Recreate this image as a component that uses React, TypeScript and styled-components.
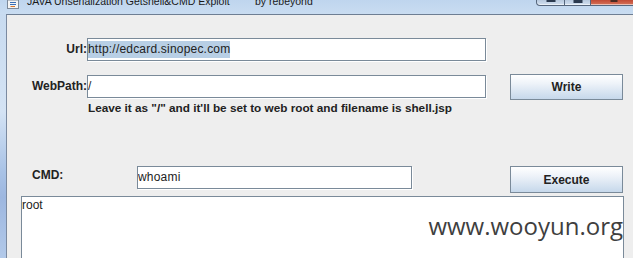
import React from "react";
import styled, { createGlobalStyle } from "styled-components";

const Global = createGlobalStyle`
  html, body {
    margin: 0;
    padding: 0;
    width: 633px;
    height: 258px;
    overflow: hidden;
    background: #eeeeee;
  }
  #root { width: 633px; height: 258px; overflow: hidden; }
`;

const Window = styled.div`
  width: 645px;
  height: 258px;
  display: flex;
  flex-direction: column;
  background: linear-gradient(180deg, #c6daef 0%, #bcd3ec 100%);
`;

const TitleBar = styled.div`
  height: 14px;
  flex-shrink: 0;
  display: flex;
  align-items: flex-start;
  overflow: hidden;
  background: linear-gradient(180deg, #bfd5ee 0%, #c9dcf1 100%);
  font-family: "Liberation Sans", Arial, sans-serif;
  font-size: 10.5px;
  color: #1a1a1a;
`;

const AppIcon = styled.svg`
  margin-left: 7px;
  width: 12px;
  height: 9px;
  flex-shrink: 0;
`;

const TitleText = styled.span<{ $w?: number }>`
  display: block;
  margin-top: -6px;
  line-height: 14px;
  white-space: nowrap;
  ${(p) => (p.$w ? `width: ${p.$w}px;` : "")}
  flex-shrink: 0;
`;

const TitleMain = styled(TitleText)`
  margin-left: 8px;
`;

const Controls = styled.div`
  margin-left: auto;
  margin-right: 7px;
  display: flex;
  flex-shrink: 0;
`;

const CtlButton = styled.div<{ $w: number; $kind: "min" | "max" | "close" }>`
  width: ${(p) => p.$w}px;
  height: 6px;
  box-sizing: border-box;
  border: 1px solid #56667c;
  border-top: none;
  margin-left: -1px;
  position: relative;
  background: ${(p) =>
    p.$kind === "close"
      ? "linear-gradient(180deg, #c24a35 0%, #d5735a 100%)"
      : "linear-gradient(180deg, #b7c8dd 0%, #d3e1f1 100%)"};
  border-radius: ${(p) =>
    p.$kind === "min" ? "0 0 0 4px" : p.$kind === "close" ? "0 0 4px 0" : "0"};
  box-shadow: inset 0 -1px 0 rgba(255, 255, 255, 0.55);
`;

const Glyph = styled.div<{ $c: string; $w: number; $h: number }>`
  position: absolute;
  top: 0;
  left: 50%;
  transform: translateX(-50%);
  width: ${(p) => p.$w}px;
  height: ${(p) => p.$h}px;
  background: ${(p) => p.$c};
`;

const Body = styled.div`
  flex: 1;
  display: flex;
  min-height: 0;
`;

const Frame = styled.div`
  width: 6px;
  flex-shrink: 0;
  background: linear-gradient(
    180deg,
    #c8dbf0 0%,
    #d4e3f4 40%,
    #a8c2e6 65%,
    #9db7e0 75%,
    #b2c9e9 100%
  );
`;

const Content = styled.div`
  flex: 1;
  display: flex;
  flex-direction: column;
  background: #eeeeee;
  border-top: 1px solid #6e7e93;
  border-left: 1px solid #7b8aa0;
  padding-top: 23px;
  font-family: "Liberation Sans", Arial, sans-serif;
  font-size: 12px;
  color: #222;
  overflow: hidden;
`;

const Row = styled.div<{ $mt: number }>`
  display: flex;
  align-items: flex-start;
  margin-top: ${(p) => p.$mt}px;
  flex-shrink: 0;
`;

const Label = styled.div`
  width: 80px;
  text-align: right;
  font-weight: bold;
  line-height: 23px;
  white-space: nowrap;
`;

const CmdLabel = styled.div`
  margin-left: 25px;
  margin-top: 2px;
  width: 105px;
  font-weight: bold;
  line-height: 14px;
`;

const TextField = styled.div<{ $w: number }>`
  width: ${(p) => p.$w}px;
  height: 23px;
  box-sizing: border-box;
  border: 1px solid #7a8a99;
  box-shadow: 1px 1px 0 #ffffff;
  background: #ffffff;
  display: flex;
  align-items: center;
  line-height: 21px;
  white-space: nowrap;
  overflow: hidden;
  letter-spacing: 0.2px;
  color: #222;
`;

const Selected = styled.span`
  background: #b8cfe5;
  line-height: 17px;
  height: 17px;
  display: inline-block;
`;

const Button = styled.div<{ $ml: number; $mt: number; $h: number }>`
  margin-left: ${(p) => p.$ml}px;
  margin-top: ${(p) => p.$mt}px;
  width: 113px;
  height: ${(p) => p.$h}px;
  box-sizing: border-box;
  border: 1px solid #7a8a99;
  background: linear-gradient(180deg, #ffffff 0%, #eef3f9 35%, #c6d8eb 100%);
  display: flex;
  align-items: center;
  justify-content: center;
  font-weight: bold;
  color: #222;
`;

const Help = styled.div`
  margin-left: 81px;
  margin-top: 1px;
  line-height: 14px;
  font-size: 11.75px;
  font-weight: bold;
  white-space: nowrap;
  flex-shrink: 0;
`;

const Output = styled.div`
  position: relative;
  margin-top: 3px;
  margin-left: 14px;
  width: 603px;
  height: 100px;
  flex-shrink: 0;
  box-sizing: border-box;
  border: 1px solid #7a8a99;
  background: #ffffff;
  padding-top: 1px;
  line-height: 14px;
`;

const Watermark = styled.div`
  position: absolute;
  right: 0;
  top: 17px;
  font-family: "Open Sans", "Noto Sans", sans-serif;
  font-size: 24px;
  line-height: 24px;
  color: #3f3f3f;
  white-space: nowrap;
`;

export default function App() {
  return (
    <>
      <Global />
      <Window>
        <TitleBar>
          <AppIcon viewBox="0 0 12 9">
            <rect x="0.5" y="0" width="11" height="8.5" fill="#f4f4f4" stroke="#7d8a9a" />
            <path d="M3 2.5h6M3 4.5h6" stroke="#3b6fb6" strokeWidth="1" />
            <path d="M3.5 6.5h4.5" stroke="#d9762c" strokeWidth="1" />
          </AppIcon>
          <TitleMain $w={228}>JAVA Unserialization Getshell&amp;CMD Exploit</TitleMain>
          <TitleText>by rebeyond</TitleText>
          <Controls>
            <CtlButton $w={29} $kind="min">
              <Glyph $c="#2b3a4f" $w={9} $h={2} />
            </CtlButton>
            <CtlButton $w={27} $kind="max">
              <Glyph $c="#2b3a4f" $w={9} $h={3} />
            </CtlButton>
            <CtlButton $w={48} $kind="close">
              <Glyph $c="#4a2a22" $w={7} $h={2} />
            </CtlButton>
          </Controls>
        </TitleBar>
        <Body>
          <Frame />
          <Content>
            <Row $mt={0}>
              <Label>Url:</Label>
              <TextField $w={399}>
                <Selected>http://edcard.sinopec.com</Selected>
              </TextField>
            </Row>
            <Row $mt={14}>
              <Label>WebPath:</Label>
              <TextField $w={399}>/</TextField>
              <Button $ml={24} $mt={-1} $h={26}>Write</Button>
            </Row>
            <Help>Leave it as "/" and it'll be set to web root and filename is shell.jsp</Help>
            <Row $mt={51}>
              <CmdLabel>CMD:</CmdLabel>
              <TextField $w={275}>whoami</TextField>
              <Button $ml={98} $mt={0} $h={27}>Execute</Button>
            </Row>
            <Output>
              root
              <Watermark>www.wooyun.org</Watermark>
            </Output>
          </Content>
        </Body>
      </Window>
    </>
  );
}
